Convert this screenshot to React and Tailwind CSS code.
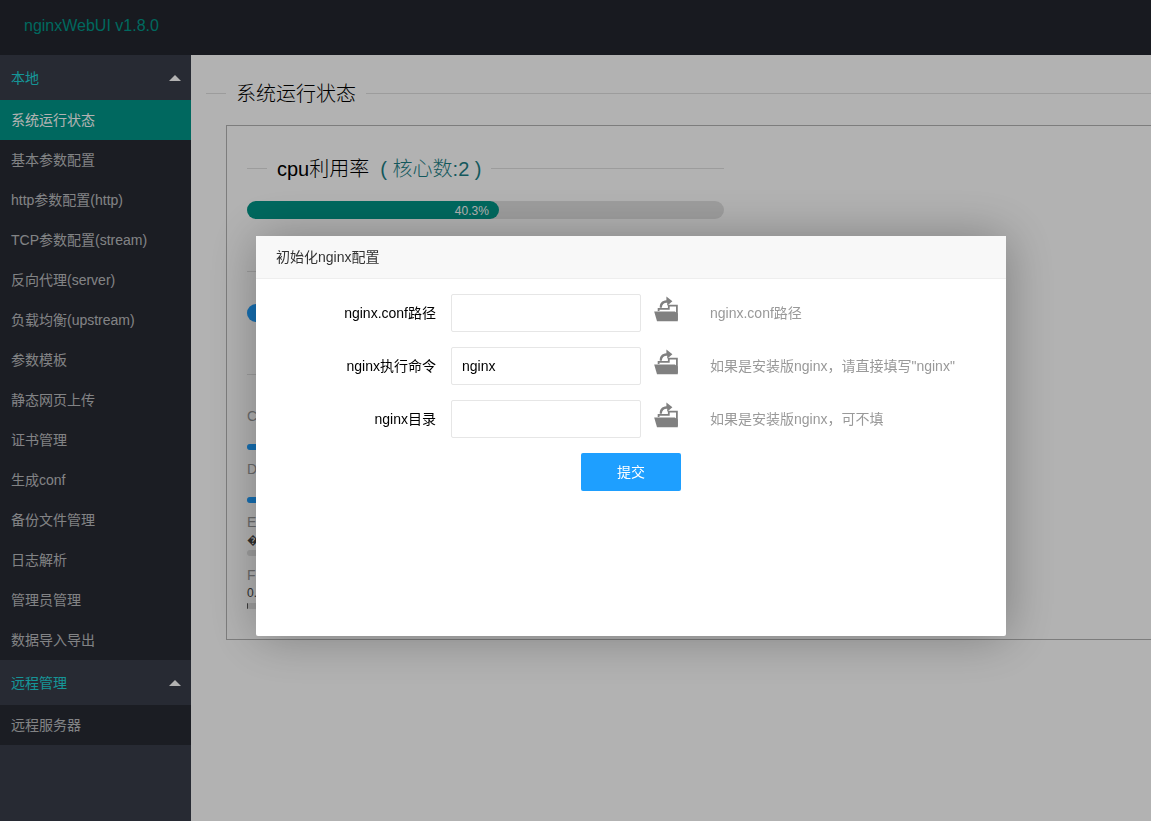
const menu = [
  {
    title: "本地",
    items: [
      "系统运行状态",
      "基本参数配置",
      "http参数配置(http)",
      "TCP参数配置(stream)",
      "反向代理(server)",
      "负载均衡(upstream)",
      "参数模板",
      "静态网页上传",
      "证书管理",
      "生成conf",
      "备份文件管理",
      "日志解析",
      "管理员管理",
      "数据导入导出"
    ]
  },
  { title: "远程管理", items: ["远程服务器"] }
];

const disks = [
  { name: "C:", text: "", percent: 60, color: "bg-[#1e9fff]" },
  { name: "D:", text: "", percent: 40, color: "bg-[#1e9fff]" },
  { name: "E:", text: "\uFFFD", percent: 0, color: "bg-[#1e9fff]" },
  { name: "F:", text: "0.2%", percent: 0.2, color: "bg-[#555]" }
];

const fields = [
  { id: "nginxPath", label: "nginx.conf路径", value: "", hint: "nginx.conf路径" },
  { id: "nginxExe", label: "nginx执行命令", value: "nginx", hint: "如果是安装版nginx，请直接填写\"nginx\"" },
  { id: "nginxDir", label: "nginx目录", value: "", hint: "如果是安装版nginx，可不填" }
];

function UploadIcon() {
  return (
    <svg viewBox="0 0 24 26" className="w-6 h-[26px]" fill="#808080" aria-hidden="true">
      <path d="M5.8 11.8C5.4 7.4 8 4.4 12.4 4.2V0.4L18.4 5.2L13.2 9.8V6.8C9.8 6.7 8.2 8.4 7.8 11.8Z" />
      <path d="M4.6 15V12.8H14.8V9.6H22.9V24" fill="none" stroke="#808080" strokeWidth="1.8" />
      <path d="M0.2 15.6H20.8L23.8 17.4V25.2H3Z" />
    </svg>
  );
}

function Title({ children }) {
  return (
    <fieldset className="border-t border-[#e0e0e0]">
      <legend className="ml-5 px-2.5 pt-0.5 h-[30px] text-xl leading-7 font-light whitespace-pre">{children}</legend>
    </fieldset>
  );
}

function Sidebar() {
  return (
    <nav className="w-[191px] shrink-0 bg-[#393d49] text-sm">
      {menu.map((group, g) => (
        <div key={group.title}>
          <button type="button" className="w-full h-[45px] pl-[11px] pr-2.5 flex items-center justify-between text-[#1fd6da]">
            {group.title}
            <span className="border-6 border-t-0 border-transparent border-b-white"></span>
          </button>
          <ul className="bg-black/30">
            {group.items.map((item, i) => (
              <li key={item}>
                <a
                  href="#"
                  className={
                    g === 0 && i === 0
                      ? "block pl-[11px] leading-10 bg-[#009688] text-white"
                      : "block pl-[11px] leading-10 text-white/70"
                  }
                >
                  {item}
                </a>
              </li>
            ))}
          </ul>
        </div>
      ))}
    </nav>
  );
}

function Status() {
  return (
    <main className="grow min-w-0 pl-[15px] pt-[23px]">
      <Title>系统运行状态</Title>
      <section className="ml-5 mt-[17px] pl-5 pt-[27px] pb-[30px] border border-r-0 border-[#b4b4b4]">
        <div className="w-[477px]">
          <Title>
            cpu利用率<span className="text-[#1c7f86]">{"  ( 核心数:2 )"}</span>
          </Title>
          <div className="mt-[18px] h-[18px] rounded-full bg-[#e2e2e2]">
            <div className="h-full pr-2.5 rounded-full bg-[#009688] text-white text-xs leading-[20px] text-right" style={{ width: "52.8%" }}>
              40.3%
            </div>
          </div>

          <div className="mt-[37px]">
            <Title />
            <div className="mt-[18px] h-[18px] rounded-full bg-[#e2e2e2]">
              <div className="h-full rounded-full bg-[#1e9fff]" style={{ width: "70%" }}></div>
            </div>
          </div>

          <div className="mt-[37px]">
            <Title />
            <div className="mt-[18px] space-y-2.5">
              {disks.map((disk) => (
                <div key={disk.name}>
                  <p className="text-sm leading-[18px] text-[#999]">{disk.name}</p>
                  <p className="h-[19px] text-xs leading-[18px] text-[#444]">{disk.text}</p>
                  <div className="h-1.5 rounded-full bg-[#e2e2e2]">
                    <div className={"h-full rounded-l-full " + disk.color} style={{ width: disk.percent + "%" }}></div>
                  </div>
                </div>
              ))}
            </div>
          </div>
        </div>
      </section>
    </main>
  );
}

function InitDialog() {
  return (
    <div className="fixed inset-0 bg-black/30 pl-64 pt-[236px]">
      <div
        role="dialog"
        aria-labelledby="initTitle"
        className="w-[750px] max-w-full min-h-[400px] rounded-xs bg-white shadow-[1px_1px_50px_rgba(0,0,0,0.3)]"
      >
        <h2 id="initTitle" className="px-5 text-sm leading-[42px] text-[#333] bg-[#f8f8f8] border-b border-[#eee]">
          初始化nginx配置
        </h2>
        <form className="pt-[15px] text-sm text-black">
          <div className="space-y-[15px]">
            {fields.map((field) => (
              <div key={field.id} className="flex items-center">
                <label htmlFor={field.id} className="w-[195px] pr-[15px] text-right">
                  {field.label}
                </label>
                <input
                  id={field.id}
                  type="text"
                  defaultValue={field.value}
                  className="w-[190px] h-[38px] px-2.5 border border-[#e6e6e6] rounded-xs"
                />
                <button type="button" aria-label="选择文件" className="ml-[13px] mb-2">
                  <UploadIcon />
                </button>
                <span className="ml-8 text-[#999]">{field.hint}</span>
              </div>
            ))}
          </div>
          <div className="mt-[15px] text-center">
            <button type="button" className="w-[100px] h-[38px] rounded-xs bg-[#1e9fff] text-white">
              提交
            </button>
          </div>
        </form>
      </div>
    </div>
  );
}

export default function App() {
  return (
    <div className="min-h-screen flex flex-col overflow-hidden bg-white text-black font-['Liberation_Sans','Noto_Sans_CJK_SC',sans-serif]">
      <header className="h-[55px] px-6 bg-[#23262e]">
        <h1 className="text-base leading-[52px] text-[#009688]">nginxWebUI v1.8.0</h1>
      </header>
      <div className="grow flex">
        <Sidebar />
        <Status />
      </div>
      <InitDialog />
    </div>
  );
}
